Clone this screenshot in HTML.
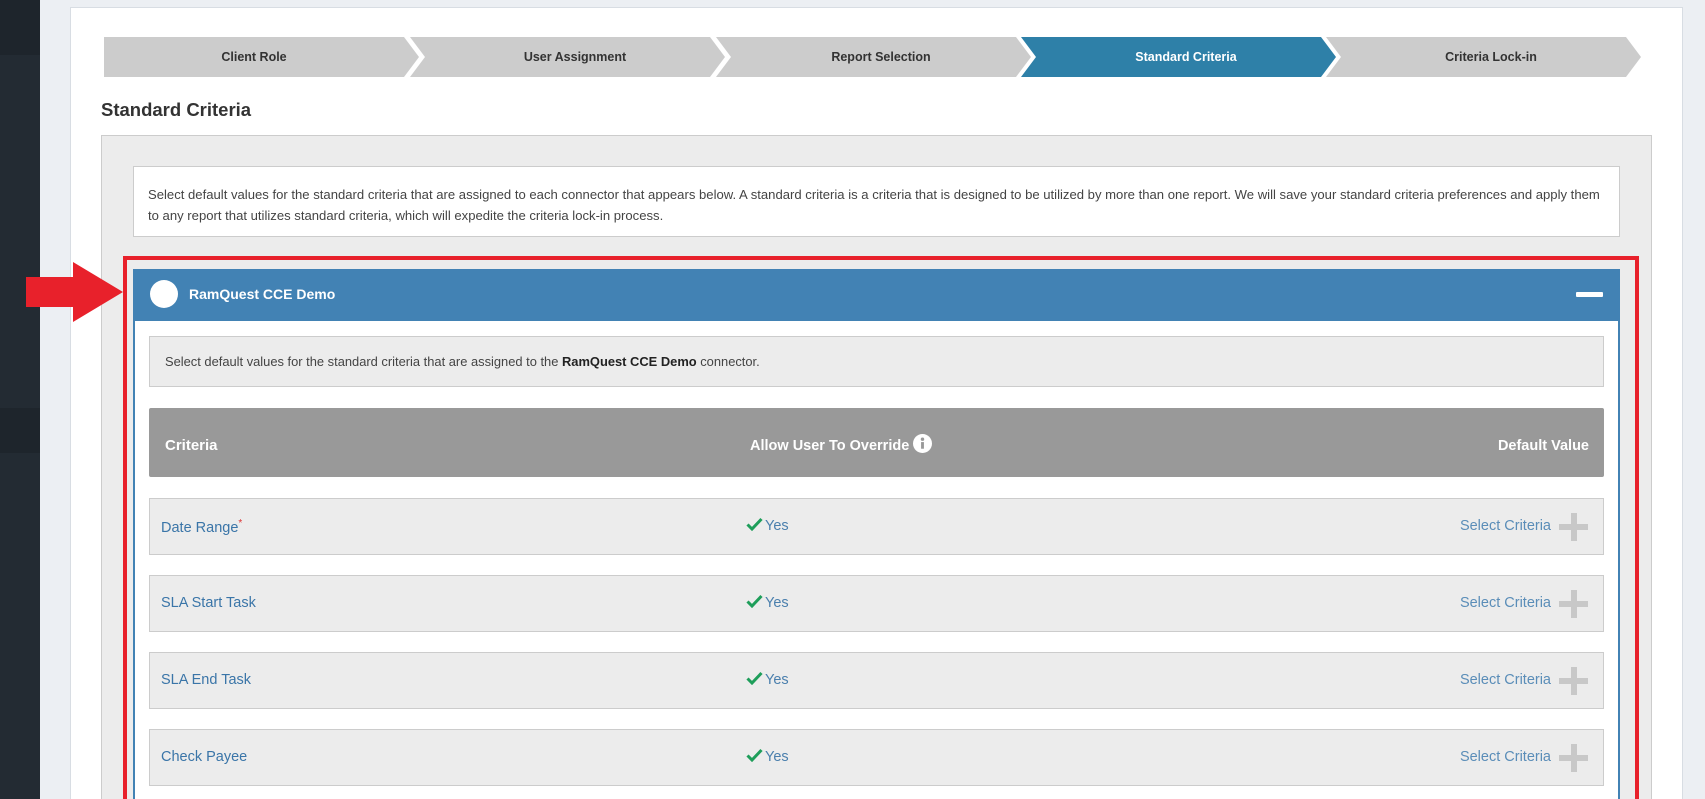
<!DOCTYPE html>
<html style="overflow:hidden;width:1705px;height:799px"><head><meta charset="utf-8"><style>
*{box-sizing:border-box;margin:0;padding:0}
body{width:1705px;height:799px;overflow:hidden;background:#eceff3;font-family:"Liberation Sans",sans-serif;position:relative}
#w{position:absolute;left:0;top:0;width:1705px;height:799px;overflow:hidden}
.abs{position:absolute}
.side{left:0;top:0;width:40px;height:799px;background:#232b33}
.panel{left:70px;top:7px;width:1613px;height:792px;background:#fff;border:1px solid #d8dde3;border-bottom:none}
.step{top:37px;height:40px;width:315px;background:#ccc;clip-path:polygon(0 0,300px 0,315px 20px,300px 40px,0 40px);font-size:12.5px;font-weight:bold;color:#333;text-align:center;line-height:40px;padding-right:15px}
.step.cut{clip-path:polygon(0 0,300px 0,315px 20px,300px 40px,0 40px,15px 20px);padding-left:15px;padding-right:0}
.step.act{background:#2e80a8;color:#fff}
h2{left:101px;top:99px;font-size:18.5px;font-weight:bold;color:#333}
.gp{left:101px;top:135px;width:1551px;height:664px;background:#ececec;border:1px solid #ccc;border-bottom:none}
.info{left:133px;top:166px;width:1487px;height:71px;background:#fff;border:1px solid #ccc;font-size:13.1px;color:#444;padding:17px 14px;line-height:21px}
.red{left:123px;top:256px;width:1516px;height:543px;border:4px solid #e8212b;border-bottom:none}
.body{left:133px;top:269px;width:1487px;height:530px;background:#fff;border:2px solid #4282b4;border-bottom:none}
.hdr{left:133px;top:269px;width:1487px;height:52px;background:#4282b4;border-radius:3px 3px 0 0}
.circ{left:150px;top:280px;width:28px;height:28px;border-radius:50%;background:#fff}
.ttl{left:189px;top:286px;font-size:14px;font-weight:bold;color:#fff}
.minus{left:1576px;top:292px;width:27px;height:5px;background:#fff;border-radius:1px}
.note{left:149px;top:336px;width:1455px;height:51px;background:#ececec;border:1px solid #ccc;font-size:12.9px;color:#444;padding:17px 15px}
.th{left:149px;top:408px;width:1455px;height:69px;background:#999;border-radius:2px;color:#fff;font-weight:bold}
.th span{line-height:20px;top:28px}
.row{left:149px;width:1455px;height:57px;background:#ececec;border:1px solid #ccc;font-size:14.5px}
.row .n{position:absolute;left:11px;top:19px;color:#3a75a8}
.row .y{position:absolute;left:596px;top:18px;color:#4a7fad}
.row .y svg{vertical-align:-1px;margin-right:2px}
.row .s{position:absolute;right:52px;top:19px;color:#5a8db8}
.row .p{position:absolute;right:15px;top:14px;width:29px;height:28px}
.row .p:before{content:"";position:absolute;left:12px;top:0;width:6px;height:28px;background:#c8c8c8}
.row .p:after{content:"";position:absolute;left:0;top:11px;width:29px;height:6px;background:#c8c8c8}
</style></head><body><div id="w">
<div class="abs side"></div>
<div class="abs" style="left:0;top:0;width:40px;height:55px;background:#1e252c"></div>
<div class="abs" style="left:0;top:408px;width:40px;height:45px;background:#1e252c"></div>
<div class="abs panel"></div>
<div class="abs step" style="left:104px">Client Role</div>
<div class="abs step cut" style="left:410px">User Assignment</div>
<div class="abs step cut" style="left:716px">Report Selection</div>
<div class="abs step cut act" style="left:1021px">Standard Criteria</div>
<div class="abs step cut" style="left:1326px">Criteria Lock-in</div>
<h2 class="abs">Standard Criteria</h2>
<div class="abs gp"></div>
<div class="abs info">Select default values for the standard criteria that are assigned to each connector that appears below. A standard criteria is a criteria that is designed to be utilized by more than one report. We will save your standard criteria preferences and apply them to any report that utilizes standard criteria, which will expedite the criteria lock-in process.</div>
<div class="abs red"></div>
<div class="abs body"></div>
<div class="abs hdr"></div>
<div class="abs circ"></div>
<div class="abs ttl">RamQuest CCE Demo</div>
<div class="abs minus"></div>
<svg class="abs" style="left:26px;top:262px" width="97" height="60"><polygon points="0,15 47,15 47,0 97,30 47,60 47,45 0,45" fill="#e8212b"/></svg>
<div class="abs note">Select default values for the standard criteria that are assigned to the <b style="color:#222">RamQuest CCE Demo</b> connector.</div>
<div class="abs th"><span class="abs" style="left:16px;font-size:15px">Criteria</span><span class="abs" style="left:601px;font-size:14.5px;top:26px">Allow User To Override <svg width="19" height="19" style="vertical-align:-3px" viewBox="0 0 20 20"><circle cx="10" cy="10" r="10" fill="#fff"/><rect x="8.5" y="8.5" width="3" height="7" fill="#999"/><circle cx="10" cy="5.5" r="1.8" fill="#999"/></svg></span><span class="abs" style="right:15px;font-size:14.5px">Default Value</span></div>
<div class="abs row" style="top:498px"><span class="n">Date Range<sup style="color:#d33;font-size:10px">*</sup></span><span class="y"><svg width="17" height="14" viewBox="0 0 17 14"><path d="M1.5 7.5l4.5 4.5 9.5-10" stroke="#1e9e5a" stroke-width="3" fill="none"/></svg>Yes</span><span class="s">Select Criteria</span><span class="p"></span></div>
<div class="abs row" style="top:575px"><span class="n">SLA Start Task</span><span class="y"><svg width="17" height="14" viewBox="0 0 17 14"><path d="M1.5 7.5l4.5 4.5 9.5-10" stroke="#1e9e5a" stroke-width="3" fill="none"/></svg>Yes</span><span class="s">Select Criteria</span><span class="p"></span></div>
<div class="abs row" style="top:652px"><span class="n">SLA End Task</span><span class="y"><svg width="17" height="14" viewBox="0 0 17 14"><path d="M1.5 7.5l4.5 4.5 9.5-10" stroke="#1e9e5a" stroke-width="3" fill="none"/></svg>Yes</span><span class="s">Select Criteria</span><span class="p"></span></div>
<div class="abs row" style="top:729px"><span class="n">Check Payee</span><span class="y"><svg width="17" height="14" viewBox="0 0 17 14"><path d="M1.5 7.5l4.5 4.5 9.5-10" stroke="#1e9e5a" stroke-width="3" fill="none"/></svg>Yes</span><span class="s">Select Criteria</span><span class="p"></span></div>
</div></body></html>
